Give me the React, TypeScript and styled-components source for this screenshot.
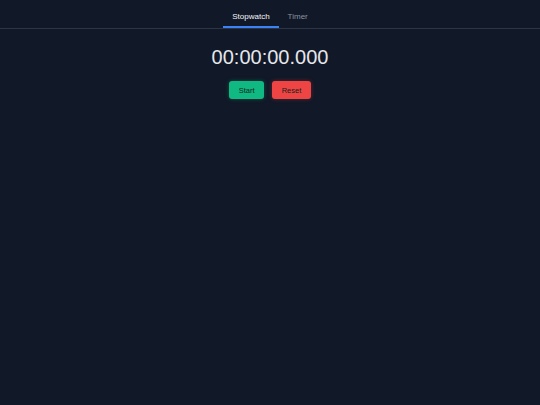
import { useEffect, useRef, useState } from "react";
import styled, { createGlobalStyle } from "styled-components";

const GlobalStyle = createGlobalStyle`
  html, body {
    margin: 0;
    padding: 0;
    background: #111827;
    min-height: 100%;
  }
  body {
    font-family: "Liberation Sans", Arial, sans-serif;
    color: #e5e7eb;
  }
`

const Page = styled.div`
  min-height: 405px;
  background: #111827;
`
const TabBar = styled.nav`
  display: flex;
  justify-content: center;
  border-bottom: 1px solid #2b3545;
`
const TabButton = styled.button<{ $active: boolean }>`
  background: none;
  border: none;
  border-bottom: 2px solid ${p => p.$active ? "#3b82f6" : "transparent"};
  padding: 12px 9px 5px;
  margin: 0;
  font-family: inherit;
  font-size: 8px;
  line-height: 9px;
  color: ${p => p.$active ? "#f3f4f6" : "#8b93a1"};
  cursor: pointer;
`
const Main = styled.main`
  display: flex;
  flex-direction: column;
  align-items: center;
  padding-top: 17px;
`
const TimeDisplay = styled.div`
  font-size: 20px;
  line-height: 23px;
  color: #e5e7eb;
  font-variant-numeric: tabular-nums;
`
const ButtonRow = styled.div`
  display: flex;
  gap: 8px;
  margin-top: 12px;
`
const ActionButton = styled.button<{ $color: string; $glow: string }>`
  height: 18px;
  padding: 0 9.5px;
  border: none;
  border-radius: 3px;
  background: ${p => p.$color};
  box-shadow: 0 0 4px ${p => p.$glow};
  color: #10231c;
  font-family: inherit;
  font-size: 7.5px;
  cursor: pointer;
`

const pad = (n: number, len = 2) => String(n).padStart(len, "0")

function format(ms: number) {
    const h = Math.floor(ms / 3600000)
    const m = Math.floor(ms / 60000) % 60
    const s = Math.floor(ms / 1000) % 60
    return `${pad(h)}:${pad(m)}:${pad(s)}.${pad(ms % 1000, 3)}`
}

export default function App() {
    const [tab, setTab] = useState<"stopwatch" | "timer">("stopwatch")
    const [elapsed, setElapsed] = useState(0)
    const [running, setRunning] = useState(false)
    const startRef = useRef(0)

    useEffect(() => {
        if (!running) return
        startRef.current = Date.now() - elapsed
        const id = setInterval(() => setElapsed(Date.now() - startRef.current), 31)
        return () => clearInterval(id)
    }, [running])

    return (
        <Page>
            <GlobalStyle/>
            <TabBar>
                <TabButton $active={tab === "stopwatch"} onClick={() => setTab("stopwatch")}>Stopwatch</TabButton>
                <TabButton $active={tab === "timer"} onClick={() => setTab("timer")}>Timer</TabButton>
            </TabBar>
            <Main>
                <TimeDisplay>{format(elapsed)}</TimeDisplay>
                <ButtonRow>
                    <ActionButton $color="#10b981" $glow="rgba(16, 185, 129, 0.35)"
                                  onClick={() => setRunning(r => !r)}>
                        {running ? "Stop" : "Start"}
                    </ActionButton>
                    <ActionButton $color="#ef4444" $glow="rgba(239, 68, 68, 0.35)"
                                  onClick={() => { setRunning(false); setElapsed(0) }}>
                        Reset
                    </ActionButton>
                </ButtonRow>
            </Main>
        </Page>
    )
}
